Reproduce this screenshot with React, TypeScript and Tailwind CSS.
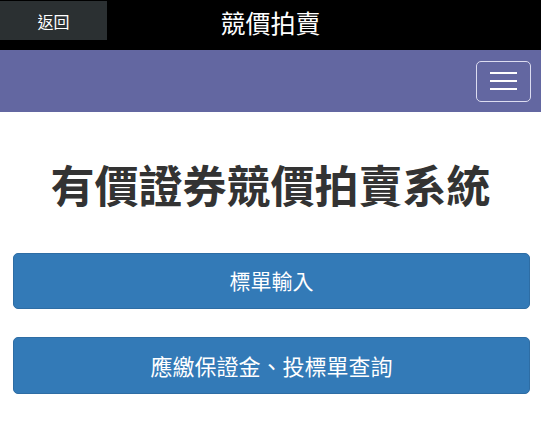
import React from "react";

export default function App() {
  const font = { fontFamily: '"Noto Sans CJK TC", "Noto Sans", sans-serif' };
  return (
    <div className="w-[541px] h-[422px] bg-white overflow-hidden" style={font}>
      <div className="h-[50px] bg-black relative flex items-center justify-center">
        <button className="absolute left-0 top-[1px] w-[107px] h-[39px] bg-[#2b3032] text-white text-[16px] leading-none flex items-center justify-center">
          返回
        </button>
        <div className="text-white text-[25px] leading-none -mt-[6px]">競價拍賣</div>
      </div>
      <div className="h-[62px] bg-[#6367a1] flex items-center justify-end pr-[10px]">
        <button className="w-[55px] h-[41px] border border-[#dcdcf0] rounded-[5px] flex flex-col items-center justify-center gap-[6px]">
          <span className="block w-[27px] h-[2px] bg-white" />
          <span className="block w-[27px] h-[2px] bg-white" />
          <span className="block w-[27px] h-[2px] bg-white" />
        </button>
      </div>
      <h1 className="mt-[47px] text-center text-[44px] leading-[50px] font-bold text-[#333333]">
        有價證券競價拍賣系統
      </h1>
      <div className="mt-[44px] pl-[13px] pr-[11px] flex flex-col gap-[28px]">
        <button className="h-[56px] w-full rounded-[5px] bg-[#337ab7] border border-[#2e6da4] text-white text-[21px] flex items-center justify-center">
          標單輸入
        </button>
        <button className="h-[57px] w-full rounded-[5px] bg-[#337ab7] border border-[#2e6da4] text-white text-[22px] flex items-center justify-center">
          應繳保證金、投標單查詢
        </button>
      </div>
    </div>
  );
}
